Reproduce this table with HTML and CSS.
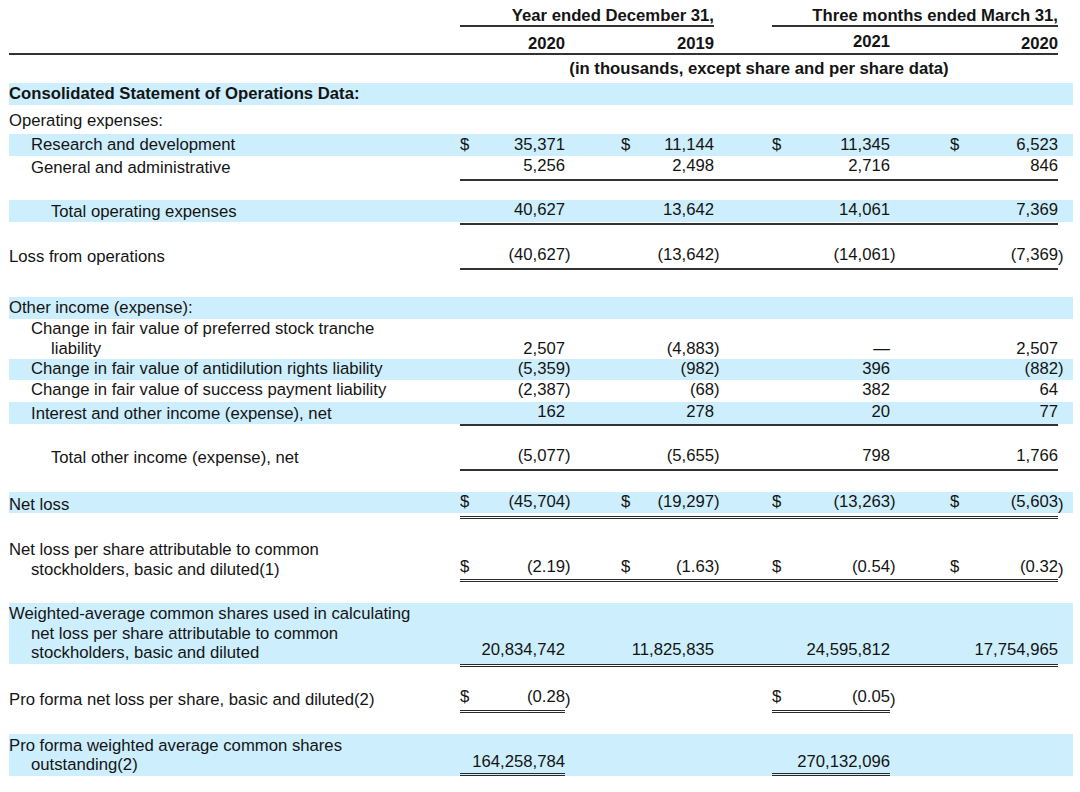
FILE: index.html
```html
<!DOCTYPE html>
<html lang="en">
<head>
<meta charset="utf-8">
<title>Consolidated Statement of Operations Data</title>
<link rel="stylesheet" href="styles.css">
</head>
<body>
<div class="sheet">

  <div class="row h1">
    <div class="lbl"></div>
    <div class="hdr span-a">Year ended December 31,</div>
    <div class="span-gap"></div>
    <div class="hdr span-c">Three months ended March 31,</div>
    <div></div>
  </div>

  <div class="row h2 hl">
    <div class="lbl"></div>
    <div></div><div class="val">2020</div><div></div>
    <div></div><div class="val">2019</div><div></div>
    <div></div>
    <div></div><div class="val up">2021</div><div></div>
    <div></div><div class="val">2020</div><div></div>
  </div>

  <div class="row h3">
    <div class="lbl"></div>
    <div class="note">(in thousands, except share and per share data)</div>
  </div>

  <div class="row shade r-cons">
    <div class="lbl"><span class="b">Consolidated Statement of Operations Data:</span></div>
  </div>

  <div class="row r-opx">
    <div class="lbl"><span>Operating expenses:</span></div>
  </div>

  <div class="row shade r-rd">
    <div class="lbl sub"><span>Research and development</span></div>
    <div>$</div><div class="val">35,371</div><div></div>
    <div>$</div><div class="val">11,144</div><div></div>
    <div></div>
    <div>$</div><div class="val">11,345</div><div></div>
    <div>$</div><div class="val">6,523</div><div></div>
  </div>

  <div class="row ul r-ga">
    <div class="lbl sub"><span>General and administrative</span></div>
    <div></div><div class="val">5,256</div><div></div>
    <div></div><div class="val">2,498</div><div></div>
    <div></div>
    <div></div><div class="val">2,716</div><div></div>
    <div></div><div class="val">846</div><div></div>
  </div>

  <div class="row shade ul r-tot">
    <div class="lbl tot"><span>Total operating expenses</span></div>
    <div></div><div class="val">40,627</div><div></div>
    <div></div><div class="val">13,642</div><div></div>
    <div></div>
    <div></div><div class="val">14,061</div><div></div>
    <div></div><div class="val">7,369</div><div></div>
  </div>

  <div class="row ul r-loss">
    <div class="lbl"><span>Loss from operations</span></div>
    <div></div><div class="val">(40,627</div><div>)</div>
    <div></div><div class="val">(13,642</div><div>)</div>
    <div></div>
    <div></div><div class="val">(14,061</div><div>)</div>
    <div></div><div class="val">(7,369</div><div>)</div>
  </div>

  <div class="row shade r-oth">
    <div class="lbl"><span>Other income (expense):</span></div>
  </div>

  <div class="row r-pref">
    <div class="lbl sub"><span>Change in fair value of preferred stock tranche<br>liability</span></div>
    <div></div><div class="val">2,507</div><div></div>
    <div></div><div class="val">(4,883</div><div>)</div>
    <div></div>
    <div></div><div class="val">—</div><div></div>
    <div></div><div class="val">2,507</div><div></div>
  </div>

  <div class="row shade r-one">
    <div class="lbl sub"><span>Change in fair value of antidilution rights liability</span></div>
    <div></div><div class="val">(5,359</div><div>)</div>
    <div></div><div class="val">(982</div><div>)</div>
    <div></div>
    <div></div><div class="val">396</div><div></div>
    <div></div><div class="val">(882</div><div>)</div>
  </div>

  <div class="row r-one">
    <div class="lbl sub"><span>Change in fair value of success payment liability</span></div>
    <div></div><div class="val">(2,387</div><div>)</div>
    <div></div><div class="val">(68</div><div>)</div>
    <div></div>
    <div></div><div class="val">382</div><div></div>
    <div></div><div class="val">64</div><div></div>
  </div>

  <div class="row shade ul r-int">
    <div class="lbl sub"><span>Interest and other income (expense), net</span></div>
    <div></div><div class="val">162</div><div></div>
    <div></div><div class="val">278</div><div></div>
    <div></div>
    <div></div><div class="val">20</div><div></div>
    <div></div><div class="val">77</div><div></div>
  </div>

  <div class="row ul r-toth">
    <div class="lbl tot"><span>Total other income (expense), net</span></div>
    <div></div><div class="val">(5,077</div><div>)</div>
    <div></div><div class="val">(5,655</div><div>)</div>
    <div></div>
    <div></div><div class="val">798</div><div></div>
    <div></div><div class="val">1,766</div><div></div>
  </div>

  <div class="row shade dl r-net">
    <div class="lbl"><span>Net loss</span></div>
    <div>$</div><div class="val">(45,704</div><div>)</div>
    <div>$</div><div class="val">(19,297</div><div>)</div>
    <div></div>
    <div>$</div><div class="val">(13,263</div><div>)</div>
    <div>$</div><div class="val">(5,603</div><div>)</div>
  </div>

  <div class="row dl r-nlps">
    <div class="lbl"><span>Net loss per share attributable to common<br>stockholders, basic and diluted(1)</span></div>
    <div>$</div><div class="val">(2.19</div><div>)</div>
    <div>$</div><div class="val">(1.63</div><div>)</div>
    <div></div>
    <div>$</div><div class="val">(0.54</div><div>)</div>
    <div>$</div><div class="val">(0.32</div><div>)</div>
  </div>

  <div class="row shade dl r-wavg">
    <div class="lbl"><span>Weighted-average common shares used in calculating<br>net loss per share attributable to common<br>stockholders, basic and diluted</span></div>
    <div></div><div class="val">20,834,742</div><div></div>
    <div></div><div class="val">11,825,835</div><div></div>
    <div></div>
    <div></div><div class="val">24,595,812</div><div></div>
    <div></div><div class="val">17,754,965</div><div></div>
  </div>

  <div class="row dlp r-pf">
    <div class="lbl"><span>Pro forma net loss per share, basic and diluted(2)</span></div>
    <div>$</div><div class="val">(0.28</div><div>)</div>
    <div></div><div class="val"></div><div></div>
    <div></div>
    <div>$</div><div class="val">(0.05</div><div>)</div>
    <div></div><div class="val"></div><div></div>
  </div>

  <div class="row shade dlp r-pfw">
    <div class="lbl"><span>Pro forma weighted average common shares<br>outstanding(2)</span></div>
    <div></div><div class="val">164,258,784</div><div></div>
    <div></div><div class="val"></div><div></div>
    <div></div>
    <div></div><div class="val">270,132,096</div><div></div>
    <div></div><div class="val"></div><div></div>
  </div>

</div>
</body>
</html>
```

FILE: styles.css
```css
html, body {
  margin: 0;
  padding: 0;
  background: #ffffff;
}

.sheet {
  padding-left: 9px;
  width: 1064px;
  font-family: "Liberation Sans", Arial, Helvetica, sans-serif;
  font-size: 16.7px;
  line-height: 19.5px;
  color: #141414;
}

.row {
  --pb: 1px;
  --bb: 0px;
  display: grid;
  grid-template-columns: 451px 20px 85px 6px 69px 74px 6px 52px 20px 98px 6px 74px 88px 15px;
  box-sizing: border-box;
}

.row > div {
  display: flex;
  align-items: flex-end;
  padding-bottom: var(--pb);
  white-space: nowrap;
}

.row > :nth-child(5) { padding-left: 50px; }
.row > :nth-child(12) { padding-left: 54px; }

.val { justify-content: flex-end; }

.lbl { padding-left: 22px; text-indent: -22px; }
.lbl.sub { padding-left: 42px; text-indent: -20px; }
.lbl.tot { padding-left: 42px; text-indent: 0; }
.lbl > span { display: block; }
.b { font-weight: bold; }

.shade {
  background-image: linear-gradient(#cdeefc, #cdeefc);
  background-repeat: no-repeat;
  background-position: top left;
  background-size: 100% calc(100% - var(--bb));
}

/* underline rules */
.ul { --bb: 2px; }
.ul > :nth-child(n+2):nth-child(-n+13) { border-bottom: 2px solid #333; }
.dl { --bb: 3px; }
.dl > :nth-child(n+2):nth-child(-n+13) { border-bottom: 3px double #2a2a2a; }
.dlp > :nth-child(2), .dlp > :nth-child(3),
.dlp > :nth-child(9), .dlp > :nth-child(10) { border-bottom: 3px double #2a2a2a; }

/* header */
.h1 { height: 27px; --pb: 0px; font-weight: bold; }
.span-a { grid-column: 2 / 7; justify-content: flex-end; border-bottom: 2px solid #333; }
.span-gap { grid-column: 7 / 9; }
.span-c { grid-column: 9 / 14; justify-content: flex-end; border-bottom: 2px solid #333; }

.h2 { height: 28px; --pb: 0px; font-weight: bold; }
.hl > :nth-child(-n+13) { border-bottom: 2px solid #333; }
.h2 > .up { padding-bottom: 2px; }

.h3 { height: 25px; --pb: 2px; font-weight: bold; }
.note { grid-column: 2 / 14; justify-content: center; }

/* body rows */
.r-cons { margin-top: 3px; height: 22px; --pb: 2px; }
.r-opx { margin-top: 5px; height: 22px; --pb: 1.5px; }
.r-rd { margin-top: 2px; height: 22px; --pb: 2px; }
.r-ga { height: 23px; --pb: 3px; }
.r-tot { margin-top: 21px; height: 24px; --pb: 3px; }
.r-loss { margin-top: 21px; height: 24px; --pb: 3px; }
.r-oth { margin-top: 28px; height: 21.5px; }
.r-pref { height: 40px; --pb: 0.5px; }
.r-one { height: 21.5px; --pb: 2px; }
.r-int { height: 24px; --pb: 3px; }
.r-toth { margin-top: 20.5px; height: 24px; --pb: 3px; }
.r-net { margin-top: 22px; height: 24px; --pb: 4.5px; }
.r-nlps { margin-top: 23px; height: 43px; --pb: 3px; }
.r-wavg { margin-top: 21px; height: 64px; --pb: 4.5px; }
.r-pf { margin-top: 20px; height: 24px; --pb: 3.5px; }
.r-pfw { margin-top: 23px; height: 42px; --pb: 1.5px; }
```
